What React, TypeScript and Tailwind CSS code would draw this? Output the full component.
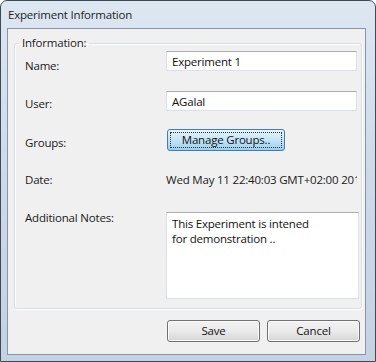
import React from 'react';

const font = { fontFamily: '"Open Sans", "Noto Sans", sans-serif', letterSpacing: '-0.2px' };

const TextBox = ({ value }: { value: string }) => (
  <input
    readOnly
    value={value}
    className="h-[20px] w-[191px] border border-[#dbe1e8] border-t-[#abadb3] bg-white pl-[5px] text-[11.5px] text-[#111] outline-none"
  />
);

const Row = ({ label, className = '', labelPad = '', children }: {
  label: string;
  className?: string;
  labelPad?: string;
  children: React.ReactNode;
}) => (
  <div className={`flex items-start ${className}`}>
    <div className={`w-[141px] shrink-0 leading-[16px] ${labelPad}`}>{label}</div>
    {children}
  </div>
);

const WinButton = ({ label }: { label: string }) => (
  <button className="h-[22px] w-[93px] rounded-[3px] border border-[#707070] bg-gradient-to-b from-[#f2f2f2] via-[#ebebeb] to-[#d5d5d5] text-[11.5px] text-[#111] shadow-[inset_0_0_0_1px_#fcfcfc]">
    {label}
  </button>
);

export default function App() {
  return (
    <div className="h-[362px] w-[376px] bg-white" style={font}>
      <div className="flex h-full w-full flex-col rounded-t-[7px] border border-[#3f4a57] bg-gradient-to-b from-[#dde7f2] via-[#cdd9e8] to-[#c4d2e2] pb-[6px] pl-[6px] pr-[9px]">
        {/* Title bar */}
        <div className="flex h-[27px] shrink-0 items-center pl-[1px] pt-[1px] text-[11.5px] text-[#1e1e1e]">
          Experiment Information
        </div>

        {/* Client area */}
        <div className="flex flex-1 flex-col border border-[#8595aa] bg-[#f0f0f0] text-[11.5px] text-[#1a1a1a]">
          <fieldset className="ml-[6px] mr-[3px] mt-[6px] rounded-[3px] border border-[#d5dfe5] pb-[9px] pl-[10px] shadow-[inset_1px_1px_0_#fff,1px_1px_0_#fff]">
            <legend className="-ml-[6px] px-[3px] leading-[16px]">Information:</legend>

            <Row label="Name:" className="h-[20px]" labelPad="pt-[7px]">
              <TextBox value="Experiment 1" />
            </Row>

            <Row label="User:" className="mt-[20px] h-[20px]" labelPad="pt-[5px]">
              <TextBox value="AGalal" />
            </Row>

            <Row label="Groups:" className="mt-[18px] h-[22px]" labelPad="pt-[6px]">
              <button className="ml-[1px] h-[22px] w-[118px] rounded-[3px] border border-[#3c7fb1] bg-gradient-to-b from-[#e5f4fc] via-[#c4e5f6] to-[#98d1ef] p-[2px] text-[11.5px] text-[#111]">
                <span className="flex h-full w-full items-center justify-center border border-dotted border-[#333]">
                  Manage Groups..
                </span>
              </button>
            </Row>

            <Row label="Date:" className="mt-[21px] h-[16px]">
              <div className="w-[191px] overflow-hidden whitespace-nowrap leading-[16px]">
                Wed May 11 22:40:03 GMT+02:00 2011
              </div>
            </Row>

            <Row label="Additional Notes:" className="mt-[22px]">
              <textarea
                readOnly
                className="mt-[2px] h-[87px] w-[193px] resize-none border border-[#dbe1e8] border-t-[#abadb3] bg-white pl-[5px] pt-[3px] text-[11.5px] leading-[15px] text-[#111] outline-none"
                defaultValue={'This Experiment is intened\nfor demonstration ..'}
              />
            </Row>
          </fieldset>

          <div className="mt-[11px] flex justify-end gap-[7px] pr-[5px]">
            <WinButton label="Save" />
            <WinButton label="Cancel" />
          </div>
        </div>
      </div>
    </div>
  );
}
